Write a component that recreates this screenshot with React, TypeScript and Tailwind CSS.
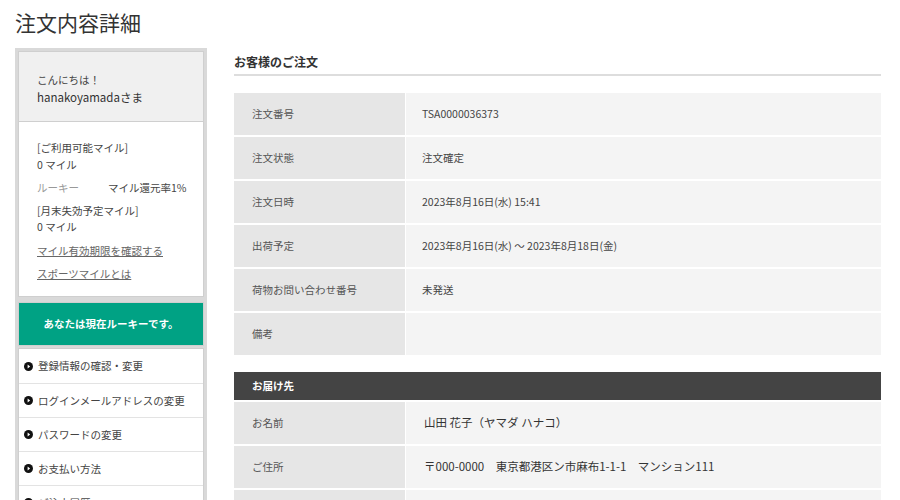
import React from "react";

const font = { fontFamily: '"Noto Sans CJK JP", "Noto Sans", sans-serif' };

function Bullet() {
  return (
    <svg width="9" height="9" viewBox="0 0 10 10" className="shrink-0">
      <circle cx="5" cy="5" r="5" fill="#111" />
      <path d="M4 2.8 L6.8 5 L4 7.2 Z" fill="#fff" />
    </svg>
  );
}

function Row({ label, value, big }: { label: string; value: string; big?: boolean }) {
  return (
    <div className="flex gap-px h-[42px] mb-[2px]">
      <div className="w-[171px] shrink-0 bg-[#e6e6e6] flex items-center pl-[18px] text-[10.5px] text-[#555]">{label}</div>
      <div className={`flex-1 bg-[#f4f4f4] flex items-center ${big ? "pl-[18px] text-[11.5px] text-[#333]" : "pl-[16px] text-[10.5px] text-[#444]"}`}>{value}</div>
    </div>
  );
}

export default function App() {
  const menu = ["登録情報の確認・変更", "ログインメールアドレスの変更", "パスワードの変更", "お支払い方法", "ご注文履歴"];
  return (
    <div className="w-[900px] h-[500px] overflow-hidden bg-white" style={font}>
      <h1 className="pl-[15px] pt-[8px] text-[21px] leading-[28px] text-[#333]">注文内容詳細</h1>
      <div className="flex mt-[12px] pl-[15px]">
        <aside className="w-[192px] shrink-0 bg-[#d9d9d9] p-[3px] flex flex-col">
          <div className="border border-[#cfcfcf] bg-[#f0f0f0] pl-[18px] pt-[20px] pb-[15px]">
            <div className="text-[10.5px] leading-[16px] text-[#444]">こんにちは！</div>
            <div className="text-[11.5px] leading-[18px] text-[#333]">hanakoyamadaさま</div>
          </div>
          <div className="border border-t-0 border-[#cfcfcf] bg-white pl-[18px] pt-[17px] pb-[14px] text-[10.5px] text-[#444]">
            <div className="leading-[17px]">[ご利用可能マイル]</div>
            <div className="leading-[17px]">0 マイル</div>
            <div className="flex leading-[17px] mt-[6px]">
              <span className="w-[71px] text-[#999]">ルーキー</span>
              <span>マイル還元率1%</span>
            </div>
            <div className="leading-[17px] mt-[6px]">[月末失効予定マイル]</div>
            <div className="leading-[16px]">0 マイル</div>
            <div className="leading-[17px] mt-[7px] underline text-[#666]">マイル有効期限を確認する</div>
            <div className="leading-[17px] mt-[6px] underline text-[#666]">スポーツマイルとは</div>
          </div>
          <div className="mt-[5px] h-[44px] bg-[#00a284] border border-[#cfcfcf] flex items-center justify-center text-white text-[10.5px] font-bold">
            あなたは現在ルーキーです。
          </div>
          <div className="mt-[2px] bg-white border border-[#cfcfcf]">
            {menu.map((m, i) => (
              <div key={m} className={`h-[34px] flex items-center gap-[5px] pl-[5px] text-[10.5px] text-[#444] ${i > 0 ? "border-t border-[#e3e3e3]" : ""}`}>
                <Bullet />
                <span>{m}</span>
              </div>
            ))}
          </div>
        </aside>
        <main className="ml-[27px] w-[647px]">
          <div className="pt-[5px] pb-[3px] border-b-2 border-[#dddddd] text-[12px] leading-[18px] font-bold text-[#333]">お客様のご注文</div>
          <div className="mt-[17px]">
            <Row label="注文番号" value="TSA0000036373" />
            <Row label="注文状態" value="注文確定" />
            <Row label="注文日時" value="2023年8月16日(水) 15:41" />
            <Row label="出荷予定" value="2023年8月16日(水) ～ 2023年8月18日(金)" />
            <Row label="荷物お問い合わせ番号" value="未発送" />
            <Row label="備考" value="" />
          </div>
          <div className="mt-[17px]">
            <div className="h-[28px] bg-[#444444] flex items-center pl-[18px] text-[10.5px] font-bold text-white mb-[2px]">お届け先</div>
            <Row label="お名前" value="山田 花子（ヤマダ ハナコ）" big />
            <Row label="ご住所" value="〒000-0000　東京都港区ン市麻布1-1-1　マンション111" big />
            <Row label="電話番号" value="" big />
          </div>
        </main>
      </div>
    </div>
  );
}
